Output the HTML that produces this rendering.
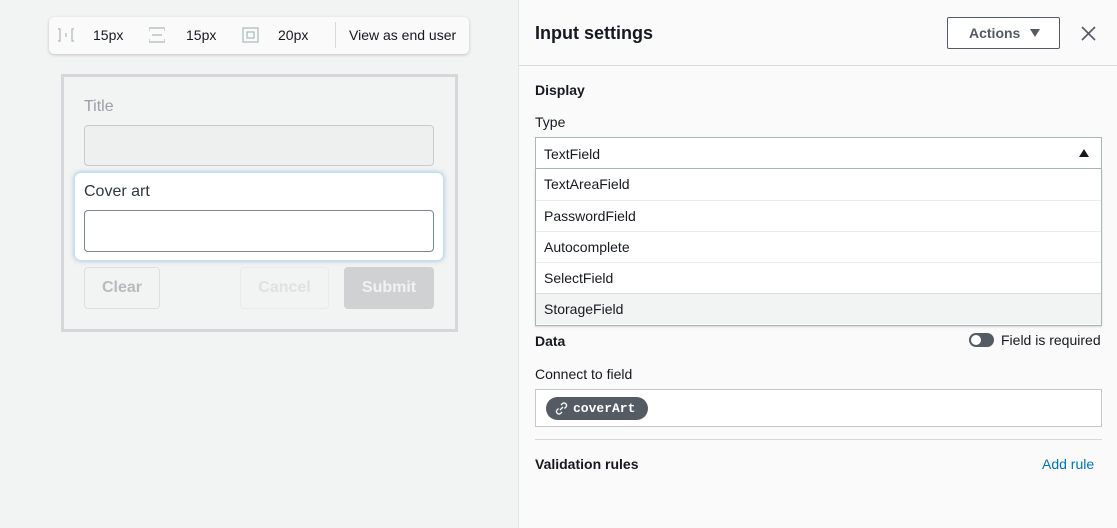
<!DOCTYPE html>
<html><head><style>
*{box-sizing:border-box;margin:0;padding:0}
body{width:1117px;height:528px;overflow:hidden;font-family:"Liberation Sans",sans-serif;background:#f2f3f3;position:relative;color:#16191f}
.a{position:absolute}
.t{font-size:14px;color:#16191f}
.dd div{position:absolute;left:0;right:0;height:31px;border-top:1px solid #e9ebed;padding:7px 8px;font-size:14px;background:#fff}
</style></head><body>
<div class="a" style="left:49px;top:17px;width:420px;height:37px;background:#fafafa;border-radius:5px;box-shadow:0 1px 3px rgba(0,0,0,.2)"></div>
<svg class="a" style="left:57px;top:27px" width="18" height="16" fill="none" stroke="#aab7b8" stroke-width="1.2"><path d="M1 2h2v12H1M9 6v4M17 2h-2v12h2"/></svg>
<div class="a t" style="left:93px;top:27px">15px</div>
<svg class="a" style="left:148px;top:27px" width="18" height="16" fill="none" stroke="#aab7b8" stroke-width="1.2"><path d="M1 1h16M1 3h1M16 3h1M4 8h10M1 15h16M1 13h1M16 13h1"/></svg>
<div class="a t" style="left:186px;top:27px">15px</div>
<svg class="a" style="left:242px;top:27px" width="17" height="16" fill="none" stroke="#aab7b8" stroke-width="1.2"><rect x="1" y="1" width="15" height="14"/><rect x="5" y="5" width="7" height="6"/></svg>
<div class="a t" style="left:278px;top:27px">20px</div>
<div class="a" style="left:335px;top:22px;width:1px;height:26px;background:#d5dbdb"></div>
<div class="a t" style="left:349px;top:27px">View as end user</div>
<div class="a" style="left:61px;top:74px;width:397px;height:258px;border:3px solid #d5d8db;background:#f2f3f3"></div>
<div class="a" style="left:84px;top:98px;font-size:16px;color:#9aa0a6">Title</div>
<div class="a" style="left:84px;top:125px;width:350px;height:41px;border:1px solid #c8cbce;border-radius:4px;background:#eef0f0"></div>
<div class="a" style="left:74px;top:172px;width:370px;height:89px;background:#fff;border-radius:7px;border:1px solid #c4dff1;box-shadow:0 0 5px rgba(80,150,210,.5)"></div>
<div class="a" style="left:84px;top:183px;font-size:16px;color:#2f3841">Cover art</div>
<div class="a" style="left:84px;top:210px;width:350px;height:42px;border:1px solid #7c8590;border-radius:4px;background:#fff"></div>
<div class="a" style="left:84px;top:267px;width:76px;height:42px;border:1px solid #dcdfe1;border-radius:4px;font-weight:bold;font-size:16px;color:#b8bbbe;text-align:center;line-height:40px">Clear</div>
<div class="a" style="left:240px;top:267px;width:89px;height:42px;border:1px solid #e8eaeb;border-radius:4px;font-weight:bold;font-size:16px;color:#dfe1e2;text-align:center;line-height:40px">Cancel</div>
<div class="a" style="left:344px;top:267px;width:90px;height:42px;border-radius:4px;background:#d0d1d2;font-weight:bold;font-size:16px;color:#f2f2f2;text-align:center;line-height:42px">Submit</div>
<div class="a" style="left:518px;top:0;width:599px;height:528px;background:#fafafa;border-left:1px solid #e3e5e7"></div>
<div class="a" style="left:519px;top:65px;width:598px;height:1px;background:#d9dcde"></div>
<div class="a" style="left:535px;top:23px;font-size:18px;font-weight:bold">Input settings</div>
<div class="a" style="left:947px;top:17px;width:113px;height:32px;border:1px solid #545b64;border-radius:2px;background:#fff;font-size:14px;font-weight:bold;color:#545b64;padding:7px 0 0 21px">Actions</div>
<svg class="a" style="left:1030px;top:29px" width="10" height="8"><path d="M0 0h10L5 8z" fill="#545b64"/></svg>
<svg class="a" style="left:1081px;top:26px" width="15" height="15" stroke="#545b64" stroke-width="1.6"><path d="M1 1l13 13M14 1L1 14"/></svg>
<div class="a" style="left:535px;top:82px;font-size:14px;font-weight:bold">Display</div>
<div class="a t" style="left:535px;top:114px">Type</div>
<div class="a" style="left:535px;top:137px;width:567px;height:32px;border:1px solid #aab7b8;background:#fff;font-size:14px;padding:8px 8px">TextField</div>
<svg class="a" style="left:1079px;top:149px" width="10" height="8"><path d="M0 8h10L5 0z" fill="#16191f"/></svg>
<div class="a dd" style="left:535px;top:169px;width:567px;height:157px;border:1px solid #aab7b8;border-top:none;background:#fff;box-shadow:0 1px 2px rgba(0,0,0,.15)">
<div style="top:0;border-top:none">TextAreaField</div>
<div style="top:31px">PasswordField</div>
<div style="top:62px">Autocomplete</div>
<div style="top:93px">SelectField</div>
<div style="top:124px;background:#f2f3f3;border-top:1px solid #d5dbdb">StorageField</div>
</div>
<div class="a" style="left:535px;top:333px;font-size:14px;font-weight:bold">Data</div>
<div class="a" style="left:969px;top:333px;width:25px;height:14px;border-radius:7px;background:#545b64"></div>
<div class="a" style="left:971px;top:335px;width:10px;height:10px;border-radius:5px;background:#fff"></div>
<div class="a t" style="left:1001px;top:332px">Field is required</div>
<div class="a t" style="left:535px;top:366px">Connect to field</div>
<div class="a" style="left:535px;top:389px;width:567px;height:38px;border:1px solid #c6c9cc;background:#fff"></div>
<div class="a" style="left:546px;top:397px;width:102px;height:23px;border-radius:12px;background:#545b64;color:#fff;font-family:'Liberation Mono',monospace;font-weight:bold;font-size:13px;padding:4px 0 0 27px">coverArt</div>
<svg class="a" style="left:555px;top:402px" width="13" height="13" fill="none" stroke="#fff" stroke-width="1.3"><path d="M5 8l3-3M6 3l1.5-1.5a2.5 2.5 0 0 1 3.5 3.5L9.5 6.5M7 10l-1.5 1.5A2.5 2.5 0 0 1 2 8l1.5-1.5"/></svg>
<div class="a" style="left:535px;top:439px;width:567px;height:1px;background:#d5dbdb"></div>
<div class="a" style="left:535px;top:456px;font-size:14px;font-weight:bold">Validation rules</div>
<div class="a" style="left:1042px;top:456px;font-size:14px;color:#0073bb">Add rule</div>
</body></html>
